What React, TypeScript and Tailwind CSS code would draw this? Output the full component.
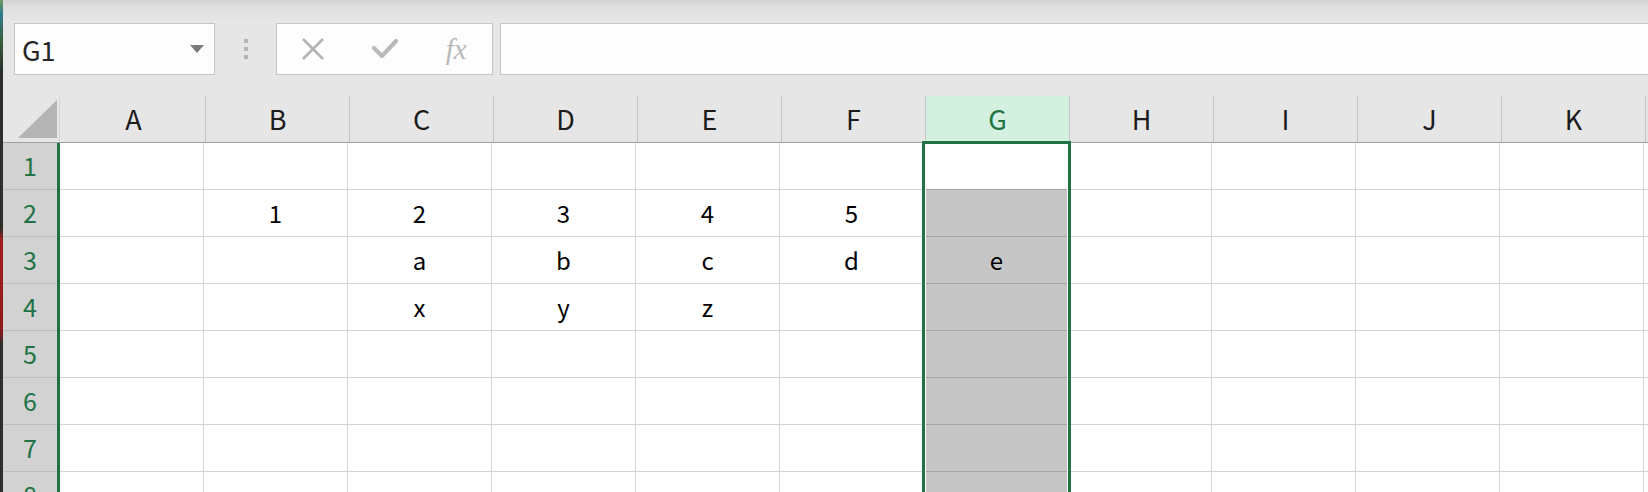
import React from 'react'

const COLS = ['A', 'B', 'C', 'D', 'E', 'F', 'G', 'H', 'I', 'J', 'K']
const ROWS = [1, 2, 3, 4, 5, 6, 7, 8]
const SELECTED_COL = 'G'

// sheet contents keyed by cell address
const CELLS: Record<string, string> = {
  B2: '1',
  C2: '2',
  D2: '3',
  E2: '4',
  F2: '5',
  C3: 'a',
  D3: 'b',
  E3: 'c',
  F3: 'd',
  G3: 'e',
  C4: 'x',
  D4: 'y',
  E4: 'z',
}

function NameBox() {
  return (
    <div className="flex w-[201px] items-center justify-between border border-[#c6c6c6] bg-[#fdfdfd] pl-[7px] pr-[10px]">
      <span className="text-[27px] leading-none text-[#262626]">G1</span>
      <svg width="14" height="8" viewBox="0 0 14 8">
        <path d="M0 0 L14 0 L7 8 Z" fill="#7a7a7a" />
      </svg>
    </div>
  )
}

function FormulaButtons() {
  return (
    <div className="flex w-[217px] items-center border border-[#c6c6c6] bg-[#fdfdfd]">
      <span className="flex w-[72px] justify-center">
        <svg width="22" height="22" viewBox="0 0 22 22">
          <path d="M1 1 L21 21 M21 1 L1 21" stroke="#b3b3b3" strokeWidth="2.6" />
        </svg>
      </span>
      <span className="flex w-[72px] justify-center">
        <svg width="26" height="20" viewBox="0 0 26 20">
          <path
            d="M2 9 L10 17 L24 2"
            stroke="#bababa"
            strokeWidth="4.2"
            fill="none"
            strokeLinecap="round"
            strokeLinejoin="round"
          />
        </svg>
      </span>
      <span className="flex w-[72px] justify-center font-['Liberation_Serif',serif] text-[29px] italic leading-none text-[#b8b8b8]">
        fx
      </span>
    </div>
  )
}

function Toolbar() {
  return (
    <>
      <div className="h-[23px] shrink-0 bg-[linear-gradient(to_bottom,#d3d3d3_0px,#dedede_6px,#e6e6e6_22px)]" />
      <div className="flex h-[52px] shrink-0 bg-[#e6e6e6] pl-[11px]">
        <NameBox />
        <div className="flex w-[61px] flex-col items-center justify-center gap-[4px]">
          <span className="h-[4px] w-[4px] bg-[#b4b4b4]" />
          <span className="h-[4px] w-[4px] bg-[#b4b4b4]" />
          <span className="h-[4px] w-[4px] bg-[#b4b4b4]" />
        </div>
        <FormulaButtons />
        <div className="ml-[7px] flex-1 border-y border-l border-[#c6c6c6] bg-[#fdfdfd]" />
      </div>
      <div className="h-[21px] shrink-0 bg-[#e6e6e6]" />
    </>
  )
}

function ColumnHeaders() {
  return (
    <div className="flex h-[47px] shrink-0 border-b border-[#9f9f9f] bg-[#e6e6e6]">
      <div className="flex w-[57px] shrink-0 border-r border-[#d8d8d8] pl-[15px] pt-[4px]">
        <svg width="39" height="38" viewBox="0 0 39 38">
          <path d="M39 0 L39 38 L0 38 Z" fill="#b4b4b4" />
        </svg>
      </div>
      <div className="w-[2px] shrink-0" />
      {COLS.map((c) => (
        <div
          key={c}
          className={
            c === SELECTED_COL
              ? 'flex w-[144px] shrink-0 items-center justify-center border-r border-[#c6c6c6] bg-[#d3f0e0] text-[27px] text-[#217346]'
              : 'flex w-[144px] shrink-0 items-center justify-center border-r border-[#c6c6c6] text-[27px] text-[#1c1c1c]'
          }
        >
          {c}
        </div>
      ))}
      <div className="flex-1" />
    </div>
  )
}

function SheetRow({ row }: { row: number }) {
  return (
    <div className="flex h-[47px] shrink-0">
      <div className="flex w-[54px] shrink-0 items-center justify-center border-b border-[#bcbcbc] bg-[#d2d2d2] text-[25px] text-[#217346]">
        {row}
      </div>
      <div className="w-[3px] shrink-0 bg-[#217346]" />
      {COLS.map((c) => {
        const value = CELLS[`${c}${row}`] ?? ''
        if (c === SELECTED_COL) {
          return (
            <div key={c} className="w-[144px] shrink-0 bg-white pl-[2px] pr-[1px]">
              <div
                className={
                  row === 1
                    ? 'flex h-full items-center justify-center border-b border-[#a6a6a6] bg-white text-[24px] text-black'
                    : 'flex h-full items-center justify-center border-b border-[#a6a6a6] bg-[#c6c6c6] text-[24px] text-black'
                }
              >
                {value}
              </div>
            </div>
          )
        }
        return (
          <div
            key={c}
            className="flex w-[144px] shrink-0 items-center justify-center border-r border-b border-[#d4d4d4] text-[24px] text-black"
          >
            {value}
          </div>
        )
      })}
      <div className="flex-1 border-b border-[#d4d4d4]" />
    </div>
  )
}

export default function App() {
  return (
    <div className="relative h-[492px] w-[1648px] overflow-hidden bg-white font-['Noto_Sans_CJK_JP','Noto_Sans',sans-serif]">
      <div className="flex h-full">
        {/* edge of the window behind */}
        <div className="w-[3px] shrink-0 bg-[linear-gradient(to_bottom,#6f9a5a_0px,#2f7a94_14px,#3a5f3c_40px,#2b2f2b_70px,#2b2f2b_228px,#a21d1d_240px,#8e1a1a_330px,#2b2f2b_345px,#2b2f2b_100%)]" />
        <div className="flex min-w-0 flex-1 flex-col">
          <Toolbar />
          <ColumnHeaders />
          {ROWS.map((r) => (
            <SheetRow key={r} row={r} />
          ))}
        </div>
      </div>
      {/* selection outline around column G */}
      <div className="pointer-events-none absolute left-[922px] top-[141px] h-[400px] w-[149px] border-[3px] border-[#217346]" />
    </div>
  )
}
